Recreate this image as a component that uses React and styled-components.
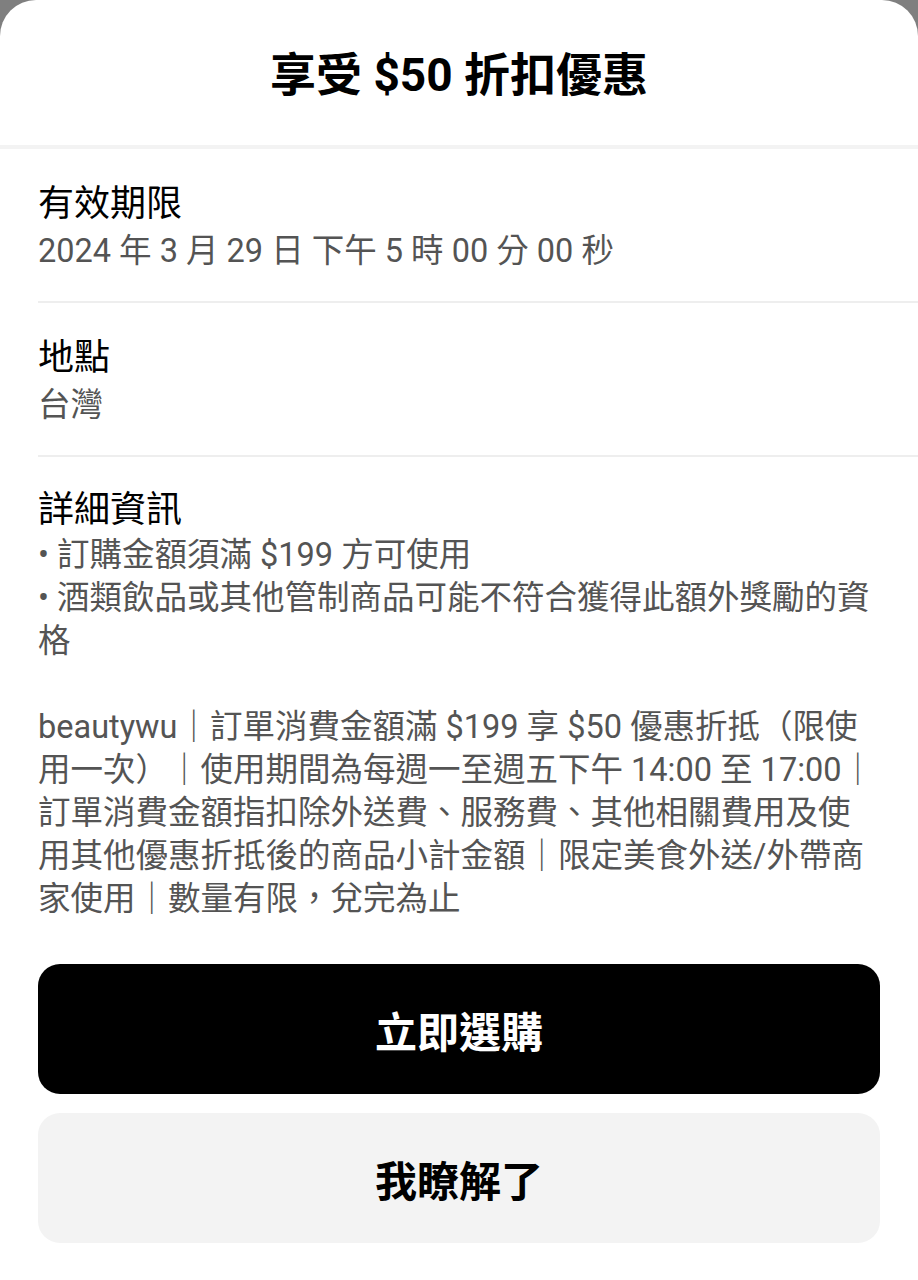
import styled, { createGlobalStyle } from "styled-components";

const COLORS = {
  backdrop: '#7f7f7f',
  sheet: '#FFFFFF',
  divider: '#EEEEEE',
  headerRule: '#F3F3F3',
  text: {
    primary: '#000000',
    secondary: '#545454'
  },
  button: {
    dark: '#000000',
    light: '#F3F3F3'
  }
};

const FONT = `Roboto, "Noto Sans CJK TC", "Noto Sans", sans-serif`;

const GlobalStyle = createGlobalStyle`
  html, body {
    margin: 0;
    padding: 0;
    background: ${COLORS.backdrop};
  }
  body {
    font-family: ${FONT};
  }
`;

const Sheet = styled.div`
  width: 918px;
  min-height: 1280px;
  background: ${COLORS.sheet};
  border-radius: 36px 36px 0 0;
  display: flex;
  flex-direction: column;
`;

const Header = styled.header`
  height: 145px;
  display: flex;
  align-items: center;
  justify-content: center;
  border-bottom: 4px solid ${COLORS.headerRule};

  h1 {
    margin: 0 0 4px;
    font-size: 46px;
    font-weight: 700;
    color: ${COLORS.text.primary};
  }
`;

const Body = styled.div`
  padding-left: 38px;
  display: flex;
  flex-direction: column;
`;

const Section = styled.section`
  padding: ${props => props.last ? '29px 38px 0 0' : '31px 38px 27px 0'};
  border-bottom: ${props => props.last ? 'none' : `2px solid ${COLORS.divider}`};
`;

const Label = styled.h2`
  margin: 0;
  font-size: 36px;
  line-height: 48px;
  font-weight: 400;
  color: ${COLORS.text.primary};
`;

const Value = styled.div`
  font-size: 32.5px;
  line-height: 46px;
  color: ${COLORS.text.secondary};
`;

const BulletList = styled.ul`
  margin: 0;
  padding: 0;
  list-style: none;

  li {
    font-size: 32.5px;
    line-height: 43px;
    color: ${COLORS.text.secondary};
  }

  li::before {
    content: '•';
    margin-right: 8px;
  }
`;

const Paragraph = styled.p`
  margin: 43px 0 0;
  font-size: 32.5px;
  line-height: 43px;
  color: ${COLORS.text.secondary};

  span {
    display: block;
    white-space: nowrap;
  }
`;

const Actions = styled.div`
  padding: 43px 38px 0;
  display: flex;
  flex-direction: column;
  gap: 19px;
`;

const ActionButton = styled.button`
  height: 130px;
  border: none;
  border-radius: 22px;
  background: ${props => props.primary ? COLORS.button.dark : COLORS.button.light};
  color: ${props => props.primary ? '#FFFFFF' : COLORS.text.primary};
  font-family: ${FONT};
  font-size: 42px;
  font-weight: 700;
  cursor: pointer;
`;

const details = [
  '訂購金額須滿 $199 方可使用',
  '酒類飲品或其他管制商品可能不符合獲得此額外獎勵的資格'
];

// lines as they break on the device
const terms = [
  'beautywu｜訂單消費金額滿 $199 享 $50 優惠折抵（限使',
  '用一次）｜使用期間為每週一至週五下午 14:00 至 17:00｜',
  '訂單消費金額指扣除外送費、服務費、其他相關費用及使',
  '用其他優惠折抵後的商品小計金額｜限定美食外送/外帶商',
  '家使用｜數量有限，兌完為止'
];

export default function App() {
  return (
    <>
      <GlobalStyle />
      <Sheet>
        <Header>
          <h1>享受 $50 折扣優惠</h1>
        </Header>
        <Body>
          <Section>
            <Label>有效期限</Label>
            <Value>2024 年 3 月 29 日 下午 5 時 00 分 00 秒</Value>
          </Section>
          <Section>
            <Label>地點</Label>
            <Value>台灣</Value>
          </Section>
          <Section last>
            <Label>詳細資訊</Label>
            <BulletList>
              {details.map((item) => (
                <li key={item}>{item}</li>
              ))}
            </BulletList>
            <Paragraph>
              {terms.map((line) => (
                <span key={line}>{line}</span>
              ))}
            </Paragraph>
          </Section>
        </Body>
        <Actions>
          <ActionButton primary>立即選購</ActionButton>
          <ActionButton>我瞭解了</ActionButton>
        </Actions>
      </Sheet>
    </>
  );
}
